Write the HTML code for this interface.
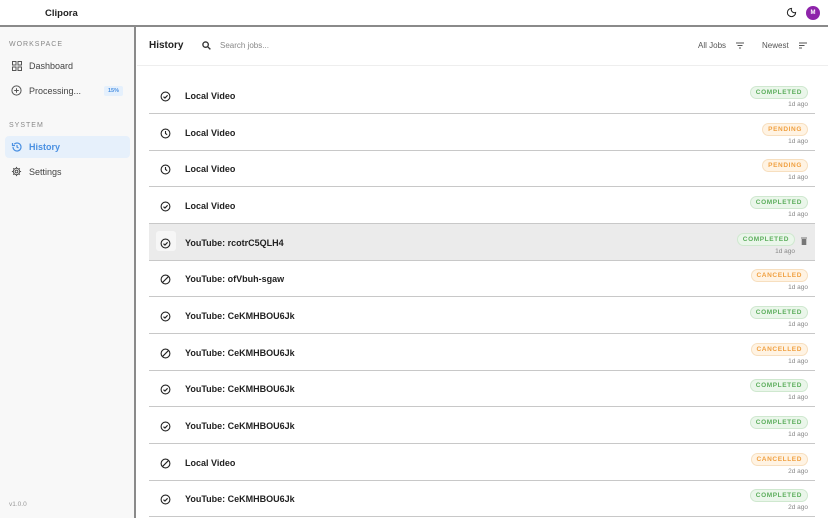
<!DOCTYPE html>
<html><head><meta charset="utf-8"><style>
*{box-sizing:border-box;margin:0;padding:0}
body{width:828px;height:518px;overflow:hidden;background:#fff;font-family:"Liberation Sans",sans-serif;color:#222;position:relative}
.abs{position:absolute}
.top{left:0;top:0;width:828px;height:27px;border-bottom:2px solid #8a8a8a;background:#fff}
.side{left:0;top:27px;width:136px;height:491px;background:#f8f8f8;border-right:2px solid #8a8a8a}
.sec{font-size:7px;letter-spacing:1px;color:#888}
.nav{font-size:9px;color:#444}
.row{left:149px;width:666px;height:37px;border-bottom:1.5px solid #c8c8c8}
.row .t{position:absolute;left:36px;top:14px;font-size:9px;font-weight:bold;color:#222}
.row svg.ic{position:absolute;left:11px;top:14px}
.badge{position:absolute;right:7px;top:9px;font-size:6.5px;font-weight:bold;letter-spacing:.6px;padding:2px 5px;border-radius:7px;line-height:7px}
.c{background:#eaf6ea;color:#5cae5c;border:1px solid #cfe8cf}
.p{background:#fff3e3;color:#f0a040;border:1px solid #f7dfbf}
.ago{position:absolute;right:7px;top:24px;font-size:6.5px;color:#888}
</style></head><body>
<div class="abs top"></div>
<div class="abs" style="left:45px;top:8px;font-size:9.5px;font-weight:bold">Clipora</div>
<svg class="abs" style="left:786px;top:7px" width="11" height="11" viewBox="0 0 24 24"><path d="M12 3a9 9 0 1 0 9 9 7 7 0 0 1-9-9z" fill="none" stroke="#222" stroke-width="2.2"/></svg>
<div class="abs" style="left:806px;top:6px;width:14px;height:14px;border-radius:50%;background:#8e24aa;color:#fff;font-size:6px;font-weight:bold;text-align:center;line-height:14px">M</div>

<div class="abs side"></div>
<div class="abs sec" style="left:9px;top:41px">WORKSPACE</div>
<svg class="abs" style="left:12px;top:61px" width="10" height="10" viewBox="0 0 10 10" fill="none" stroke="#555" stroke-width="1"><rect x="0.5" y="0.5" width="3.5" height="3.5"/><rect x="6" y="0.5" width="3.5" height="3.5"/><rect x="0.5" y="6" width="3.5" height="3.5"/><rect x="6" y="6" width="3.5" height="3.5"/></svg>
<div class="abs nav" style="left:29px;top:61px">Dashboard</div>
<svg class="abs" style="left:11px;top:85px" width="11" height="11" viewBox="0 0 12 12" fill="none" stroke="#555" stroke-width="1.1"><circle cx="6" cy="6" r="5"/><path d="M6 3.5v5M3.5 6h5"/></svg>
<div class="abs nav" style="left:29px;top:86px">Processing...</div>
<div class="abs" style="left:104px;top:86px;width:19px;height:10px;background:#e5f0fc;color:#4a90e2;font-size:5.5px;font-weight:bold;text-align:center;line-height:10px;border-radius:2px">15%</div>
<div class="abs sec" style="left:9px;top:122px">SYSTEM</div>
<div class="abs" style="left:5px;top:136px;width:125px;height:22px;background:#e6f0fb;border-radius:4px"></div>
<svg class="abs" style="left:11px;top:141px" width="12" height="12" viewBox="0 0 24 24" fill="none" stroke="#4a90e2" stroke-width="2.4"><path d="M4 12a8 8 0 1 0 2.5-5.8"/><path d="M3 4v5h5"/><path d="M12 8v4l3 2"/></svg>
<div class="abs nav" style="left:29px;top:142px;color:#4a90e2;font-weight:bold">History</div>
<svg class="abs" style="left:11px;top:166px" width="11" height="11" viewBox="0 0 24 24" fill="none" stroke="#555" stroke-width="2.2"><circle cx="12" cy="12" r="3"/><path d="M12 2v3M12 19v3M2 12h3M19 12h3M4.9 4.9l2.1 2.1M17 17l2.1 2.1M4.9 19.1L7 17M17 7l2.1-2.1"/><circle cx="12" cy="12" r="7"/></svg>
<div class="abs nav" style="left:29px;top:167px">Settings</div>
<div class="abs" style="left:9px;top:501px;font-size:6.5px;color:#999">v1.0.0</div>

<div class="abs" style="left:137px;top:65px;width:691px;height:1px;background:#eee"></div>
<div class="abs" style="left:149px;top:40px;font-size:10px;font-weight:bold">History</div>
<svg class="abs" style="left:202px;top:41px" width="9" height="9" viewBox="0 0 10 10" fill="none" stroke="#333" stroke-width="1.5"><circle cx="4" cy="4" r="3"/><path d="M6.3 6.3L9.3 9.3"/></svg>
<div class="abs" style="left:220px;top:41px;font-size:8px;color:#888">Search jobs...</div>
<div class="abs" style="left:698px;top:41px;font-size:8px;color:#555">All Jobs</div>
<svg class="abs" style="left:736px;top:42px" width="8" height="7" viewBox="0 0 8 7" stroke="#555" stroke-width="1"><path d="M0 1h8M1.5 3.5h5M3 6h2"/></svg>
<div class="abs" style="left:762px;top:41px;font-size:8px;color:#555">Newest</div>
<svg class="abs" style="left:799px;top:42px" width="8" height="7" viewBox="0 0 8 7" stroke="#555" stroke-width="1"><path d="M0 1h8M0 3.5h5.5M0 6h3"/></svg>

<div id="rows"></div>
<script>
var d=[["c","Local Video","C","1d ago"],["k","Local Video","P","1d ago"],["k","Local Video","P","1d ago"],["c","Local Video","C","1d ago"],["c","YouTube: rcotrC5QLH4","C","1d ago",1],["x","YouTube: ofVbuh-sgaw","X","1d ago"],["c","YouTube: CeKMHBOU6Jk","C","1d ago"],["x","YouTube: CeKMHBOU6Jk","X","1d ago"],["c","YouTube: CeKMHBOU6Jk","C","1d ago"],["c","YouTube: CeKMHBOU6Jk","C","1d ago"],["x","Local Video","X","2d ago"],["c","YouTube: CeKMHBOU6Jk","C","2d ago"]];
var ic={c:'<circle cx="6" cy="6" r="4.8"/><path d="M3.8 6.2l1.6 1.5 2.9-3"/>',k:'<circle cx="6" cy="6" r="4.8"/><path d="M6 3.3V6l1.8 1.3"/>',x:'<circle cx="6" cy="6" r="4.8"/><path d="M2.8 9.2l6.4-6.4"/>'};
var h="";
d.forEach(function(r,i){var top=77+i*36.65;var hl=r[4];
var b=r[2]=="C"?'<span class="badge c">COMPLETED</span>':r[2]=="P"?'<span class="badge p">PENDING</span>':'<span class="badge p">CANCELLED</span>';
if(hl)b=b.replace('class="badge c"','class="badge c" style="right:20px"');
h+='<div class="abs row" style="top:'+top+'px;'+(hl?'background:#ebebeb;':'')+'">'+(hl?'<div style="position:absolute;left:7px;top:7px;width:20px;height:20px;background:#f6f6f6;border-radius:3px"></div>':'')+'<svg class="ic" width="11" height="11" viewBox="0 0 12 12" fill="none" stroke="#222" stroke-width="1.2">'+ic[r[0]]+'</svg><span class="t">'+r[1]+'</span>'+b+'<span class="ago"'+(hl?' style="right:20px"':'')+'>'+r[3]+'</span>'+(hl?'<svg style="position:absolute;right:8px;top:13px" width="6" height="8" viewBox="0 0 6 8"><rect x="0" y="0.5" width="6" height="1" fill="#777"/><rect x="0.7" y="2" width="4.6" height="6" fill="#777"/></svg>':'')+'</div>';});
document.getElementById("rows").innerHTML=h;
</script>
</body></html>
